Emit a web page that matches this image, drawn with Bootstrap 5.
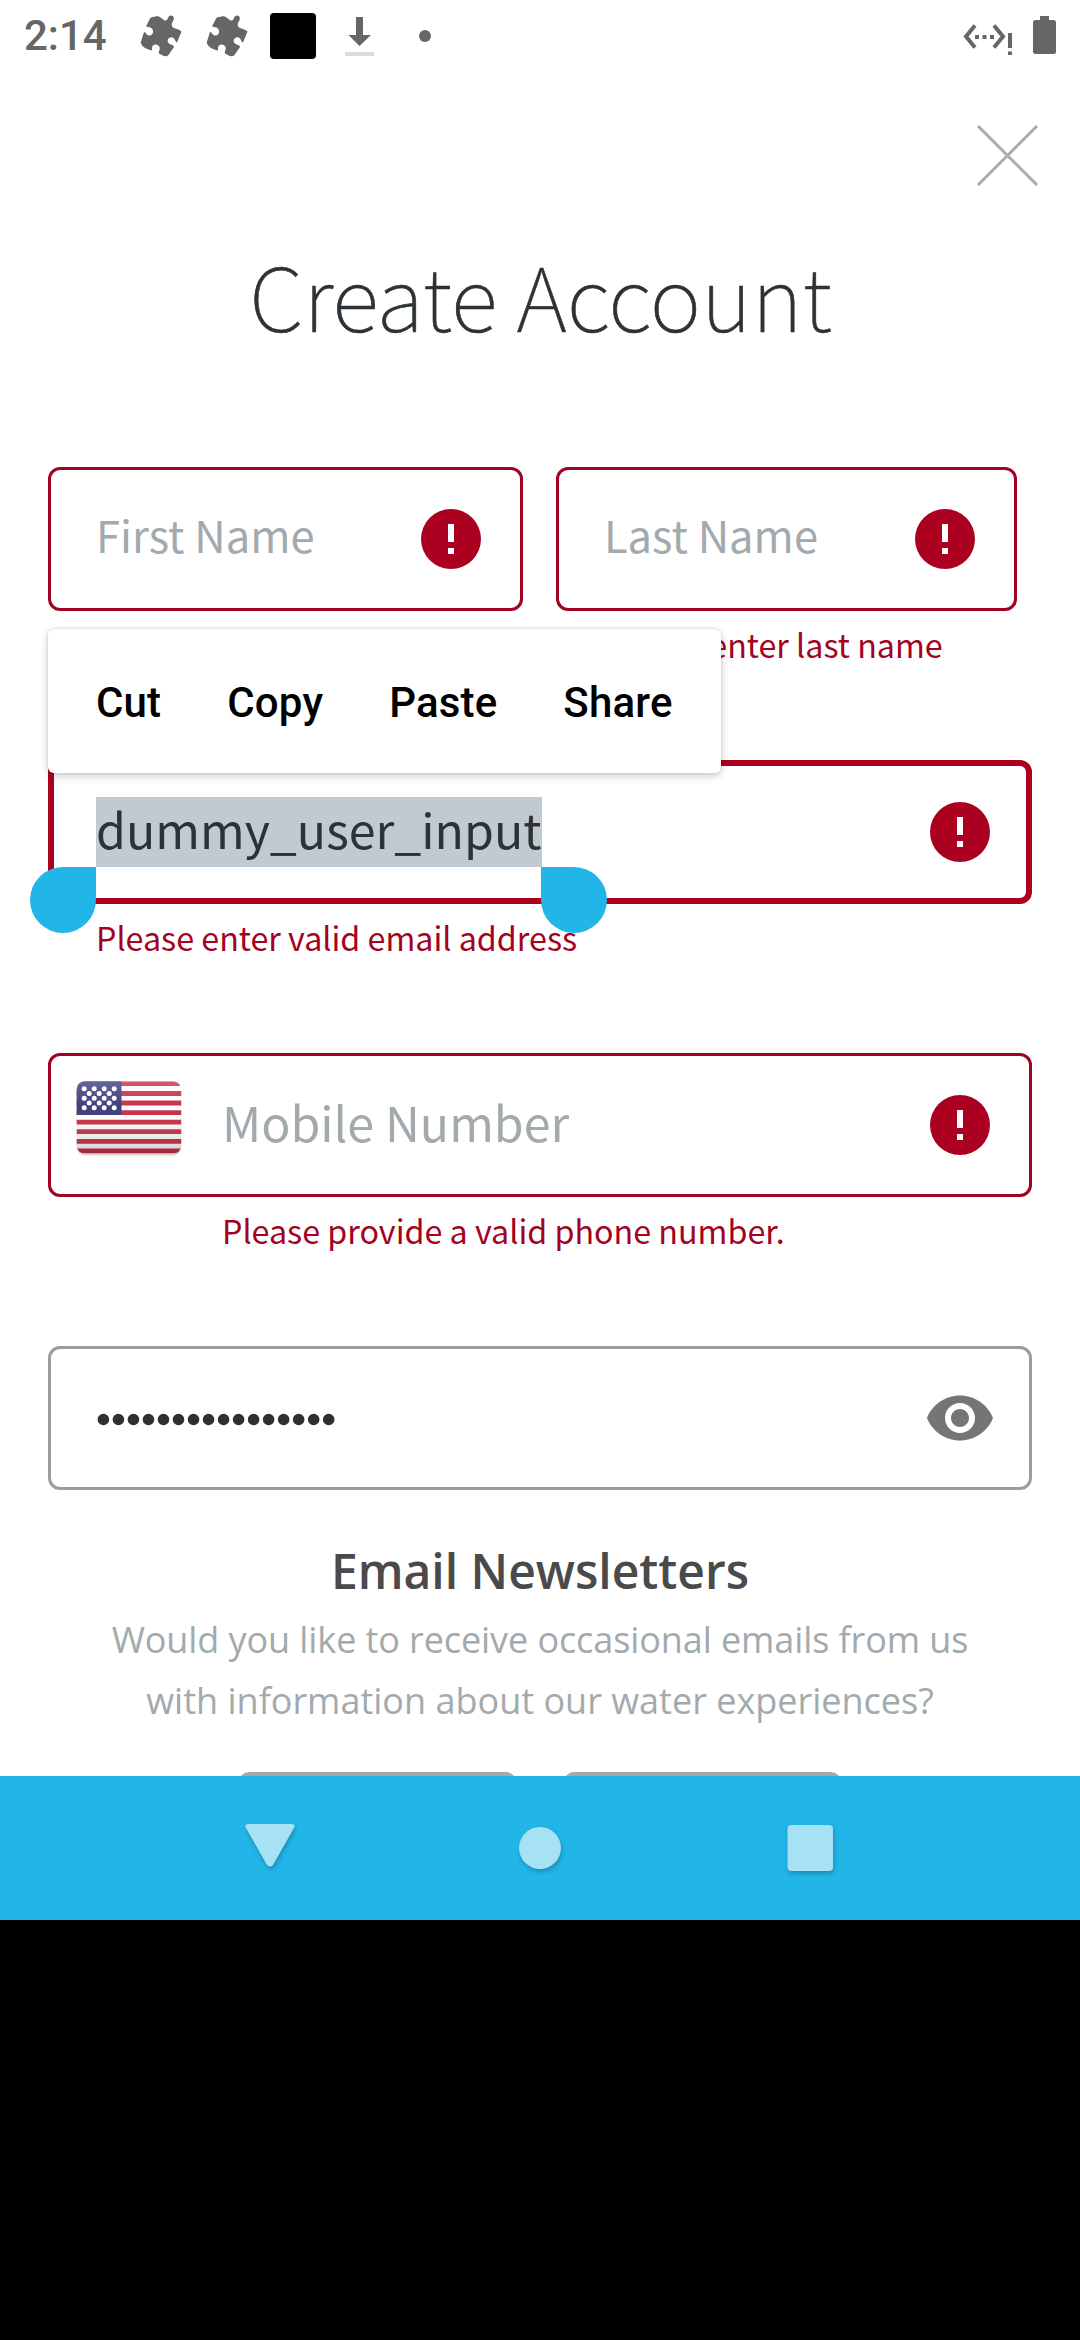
<!DOCTYPE html>
<html lang="en">
<head>
<meta charset="utf-8">
<meta name="viewport" content="width=device-width, initial-scale=1">
<title>Create Account</title>
<link href="https://cdn.jsdelivr.net/npm/bootstrap@5.3.0/dist/css/bootstrap.min.css" rel="stylesheet">
<style>
  body { background: #000; width: 1080px; font-family: "Noto Sans CJK SC", sans-serif; }
  .app-screen { height: 1776px; background: #fff; }
  .status-bar { height: 72px; padding: 0 23px 0 24px; color: #666; font-family: Roboto, sans-serif; }
  .status-clock { font-size: 42px; font-weight: 500; line-height: 72px; width: 116px; }
  .close-row { height: 156px; padding: 52px 41px 0 0; }
  .page-title { font-size: 87.6px; font-weight: 100; line-height: 128px; height: 239px; color: #2c3236; padding: 2px 0 0 1px; -webkit-text-stroke: .6px #2c3236; }
  .form-area { padding: 0 48px; }
  .name-row { gap: 33px; }
  .name-first { width: 475px; }
  .name-last { width: 461px; }
  .form-unit { height: 293px; }
  .form-unit-end { height: 144px; }
  .field-box { height: 144px; border: 3px solid #a00322; border-radius: 12px; padding: 0 33px 0 45px; background: #fff; }
  .field-focus { border: 6px solid #ab0020; padding: 0 30px 0 42px; }
  .field-plain { border-color: #9c9c9c; }
  .field-phone { padding-left: 21px; }
  .hint-text { color: #a2aaad; font-size: 48.3px; line-height: 62px; height: 70px; }
  .hint-name { font-size: 43.5px; }
  .field-error { color: #a30321; font-size: 32.25px; line-height: 46px; padding: 10px 0 0 48px; }
  .field-error-phone { padding-left: 174px; }
  .selected-text { font-size: 48.3px; line-height: 62px; height: 70px; color: #2c3236; background: #c0cad0; }
  .grip { width: 66px; height: 66px; background: #22b5e8; top: 107px; border-radius: 33px; }
  .grip-start { left: -18px; border-top-right-radius: 0; }
  .grip-end { left: 493px; border-top-left-radius: 0; }
  .edit-menu { left: 0; top: -131px; width: 673px; height: 144px; border-radius: 6px; background: #fff; z-index: 3; padding: 2px 0 0 48px; gap: 66px; font: 500 42px/144px Roboto, sans-serif; letter-spacing: .17px; color: #000; box-shadow: 0 3px 8px rgba(0,0,0,.2), 0 0 3px rgba(0,0,0,.14); }
  .flag-icon { width: 114px; height: 114px; margin-right: 36px; }
  .news-title { font: 600 48px/66px "Open Sans", sans-serif; color: #4a4a4a; margin-top: 48px; }
  .news-text { font: 400 36px/61px "Open Sans", sans-serif; color: #a2aaad; height: 168px; padding-top: 5px; }
  .news-line { letter-spacing: -.09px; }
  .choice-row { gap: 48px; }
  .choice-btn { width: 277px; height: 120px; background: #a2aaad; border-radius: 10px; }
  .nav-strip { height: 144px; background: #22b5e8; }
  .nav-glyph { filter: drop-shadow(1px 3px 2px rgba(10,70,95,.35)); }
</style>
</head>
<body>
<main class="app-screen overflow-hidden">
  <header class="status-bar d-flex align-items-center">
    <div class="status-clock">2:14</div>
    <svg width="310" height="72" viewBox="140 0 310 72" fill="#666">
      <defs>
        <path id="puzzle" d="M16 1C20 1 22 4 25 5.500C28 6 27 2 30 .700C34 0 35 4 32.500 7C31 10 32 12 34 13C37 14 40 15 41.500 16.500L37 27.500C35 27 35.500 23.500 32.500 22.500C28.500 21.500 26 26 29 28.500C31 30 34 30 34 32L28.500 40Q26 43 19 38.500C18 37 20.500 35 19.500 32C17.500 28 12 29 12 33C12.500 35 12 36 10 35Q2 33 .700 27.500L4 17C6 17 6.500 21 10 20.500C14 19.500 14 14 10.500 12.500C8 12 6 12.500 6.500 10.500L10 3.500Q12 1 15 2Z"/>
      </defs>
      <use href="#puzzle" x="140" y="15"/>
      <use href="#puzzle" x="206" y="15"/>
      <rect x="270" y="13" width="46" height="46" rx="4" fill="#000"/>
      <path d="M356 17h7v18h8L359.500 46 348.500 35h7.500z"/>
      <path d="M345 52h29v4h-29z" fill="#ddd"/>
      <circle cx="425" cy="36" r="6"/>
    </svg>
    <svg class="ms-auto" width="94" height="72" viewBox="963 0 94 72" fill="#666">
      <path d="M975 25.500 966 36.500 975 47.500M994 25.500 1003 36.500 994 47.500" fill="none" stroke="#666" stroke-width="4"/>
      <path d="M975 35h4v4h-4zM982.500 35h4v4h-4zM990 35h4v4h-4zM1008 33h4v15h-4zM1008 51.500h4v3.500h-4zM1040 16h9v4h4.500q2.500 0 2.500 2.500v29q0 2.500-2.500 2.500h-18q-2.500 0-2.500-2.500v-29q0-2.500 2.500-2.500h4.500z"/>
    </svg>
  </header>

  <div class="close-row d-flex justify-content-end">
    <svg width="63" height="63" viewBox="0 0 63 63" stroke="#a5adb0" stroke-width="3"><path d="M2 2 61 61M61 2 2 61"/></svg>
  </div>
  <h1 class="page-title text-center mb-0">Create Account</h1>

  <form class="form-area">
    <div class="name-row d-flex form-unit">
      <div class="name-first">
        <div class="field-box d-flex align-items-center justify-content-between">
          <span class="hint-text hint-name">First Name</span>
          <svg width="72" height="72" viewBox="0 0 24 24" fill="#ab0020"><path d="M12 2a10 10 0 1 0 0 20 10 10 0 0 0 0-20zm1 15h-2v-2h2zm0-4h-2V7h2z"/></svg>
        </div>
        <div class="field-error">Please enter first name</div>
      </div>
      <div class="name-last">
        <div class="field-box d-flex align-items-center justify-content-between">
          <span class="hint-text hint-name">Last Name</span>
          <svg width="72" height="72" viewBox="0 0 24 24" fill="#ab0020"><path d="M12 2a10 10 0 1 0 0 20 10 10 0 0 0 0-20zm1 15h-2v-2h2zm0-4h-2V7h2z"/></svg>
        </div>
        <div class="field-error">Please enter last name</div>
      </div>
    </div>

    <div class="form-unit position-relative">
      <div class="field-box field-focus d-flex align-items-center justify-content-between">
        <span class="selected-text">dummy_user_input</span>
        <svg width="72" height="72" viewBox="0 0 24 24" fill="#ab0020"><path d="M12 2a10 10 0 1 0 0 20 10 10 0 0 0 0-20zm1 15h-2v-2h2zm0-4h-2V7h2z"/></svg>
      </div>
      <div class="field-error">Please enter valid email address</div>
      <div class="edit-menu position-absolute d-flex"><span>Cut</span><span>Copy</span><span>Paste</span><span>Share</span></div>
      <div class="grip grip-start position-absolute"></div>
      <div class="grip grip-end position-absolute"></div>
    </div>

    <div class="form-unit">
      <div class="field-box field-phone d-flex align-items-center">
        <svg class="flag-icon" viewBox="72 1068 114 114">
          <defs>
            <clipPath id="flagClip"><rect x="76.700" y="1081.500" width="104.500" height="72" rx="8"/></clipPath>
            <linearGradient id="flagShade" x2="0" y2="1"><stop offset="0" stop-color="#fff" stop-opacity=".2"/><stop offset=".35" stop-color="#fff" stop-opacity="0"/><stop offset="1" stop-color="#000" stop-opacity=".2"/></linearGradient>
          </defs>
          <rect x="76.700" y="1083.500" width="104.500" height="72" rx="8" fill="#000" opacity=".15"/>
          <g clip-path="url(#flagClip)">
            <path fill="#fff" d="M76 1081h106v73H76z"/>
            <path stroke="#c8304a" stroke-width="4.800" d="M76 1083.500h106M76 1093.500h106M76 1103h106M76 1112.700h106M76 1122.200h106M76 1131.700h106M76 1141.300h106M76 1151h106"/>
            <path fill="#3f3f7f" d="M76 1081h45.500v34H76z"/>
            <g fill="none" stroke="#fff" stroke-width="5" stroke-linecap="round" stroke-dasharray="0 10">
              <path d="M84.200 1088.700h31M84.200 1098.300h31M84.200 1107.800h31M89.200 1093.500h21M89.200 1103.100h21"/>
            </g>
            <path fill="url(#flagShade)" d="M76 1081h106v73H76z"/>
          </g>
        </svg>
        <span class="hint-text">Mobile Number</span>
        <svg class="ms-auto" width="72" height="72" viewBox="0 0 24 24" fill="#ab0020"><path d="M12 2a10 10 0 1 0 0 20 10 10 0 0 0 0-20zm1 15h-2v-2h2zm0-4h-2V7h2z"/></svg>
      </div>
      <div class="field-error field-error-phone">Please provide a valid phone number.</div>
    </div>

    <div class="form-unit-end">
      <div class="field-box field-plain d-flex align-items-center justify-content-between">
        <svg width="240" height="16" viewBox="0 0 240 16" role="img" aria-label="Password, 16 characters"><path d="M7.400 9.500h228" fill="none" stroke="#303030" stroke-width="11.600" stroke-linecap="round" stroke-dasharray="0 15.020"/></svg>
        <svg width="72" height="72" viewBox="0 0 24 24" fill="#757575"><path d="M12 4.500C7 4.500 2.730 7.610 1 12c1.730 4.390 6 7.500 11 7.500s9.270-3.110 11-7.500c-1.730-4.390-6-7.500-11-7.500zM12 17c-2.760 0-5-2.240-5-5s2.240-5 5-5 5 2.240 5 5-2.240 5-5 5zm0-8c-1.660 0-3 1.340-3 3s1.340 3 3 3 3-1.340 3-3-1.340-3-3-3z"/></svg>
      </div>
    </div>

    <section class="text-center">
      <h2 class="news-title mb-0">Email Newsletters</h2>
      <p class="news-text mb-0"><span class="news-line">Would you like to receive occasional emails from us</span><br>with information about our water experiences?</p>
      <div class="choice-row d-flex justify-content-center"><div class="choice-btn"></div><div class="choice-btn"></div></div>
    </section>
  </form>
</main>
<nav class="nav-strip">
  <svg class="d-block" width="1080" height="144" viewBox="0 1776 1080 144">
    <g class="nav-glyph" fill="#a7e2f4">
      <path d="M249 1824h42q5 0 3 4l-21 37q-3 3-6 0l-21-37q-2-4 3-4z"/>
      <circle cx="540" cy="1848" r="21"/><rect x="787.500" y="1825" width="45.500" height="46" rx="4"/>
    </g>
  </svg>
</nav>
<script src="https://cdn.jsdelivr.net/npm/bootstrap@5.3.0/dist/js/bootstrap.bundle.min.js"></script>
</body>
</html>
